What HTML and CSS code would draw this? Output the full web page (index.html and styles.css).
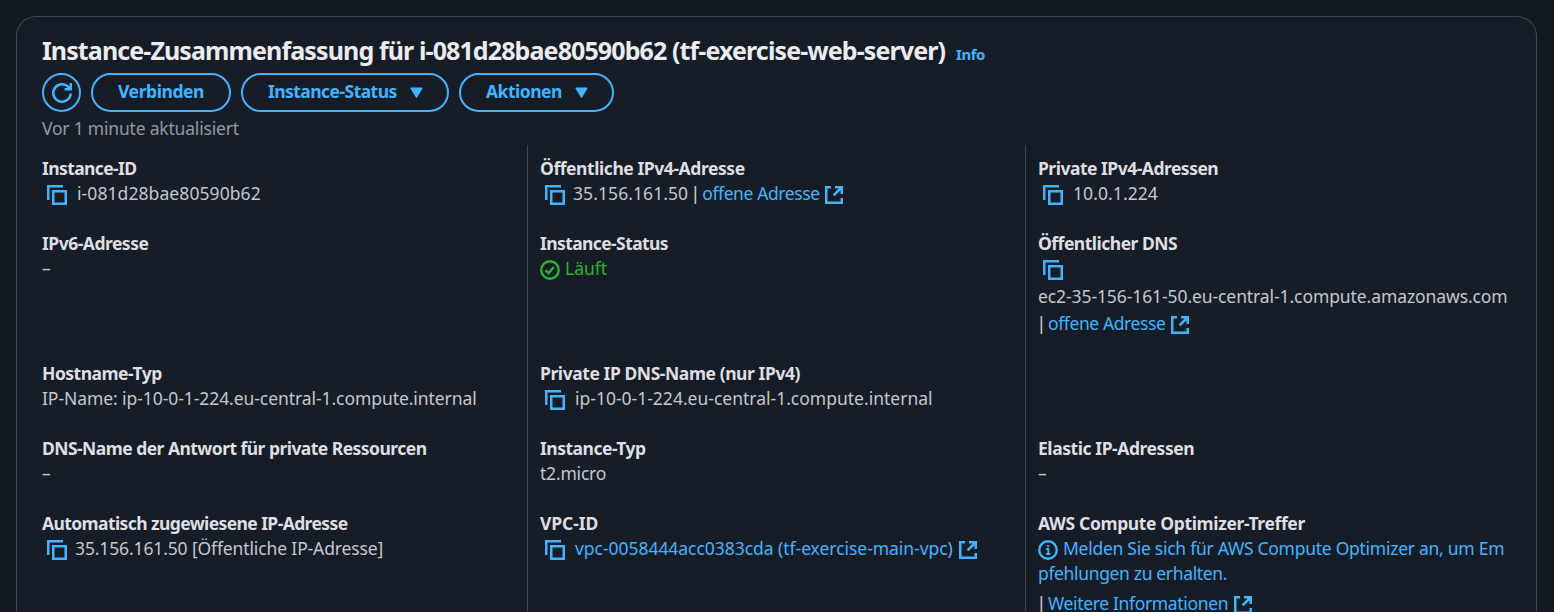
FILE: index.html
```html
<!DOCTYPE html>
<html lang="de">
<head>
<meta charset="utf-8">
<title>Instance-Zusammenfassung</title>
<link rel="stylesheet" href="styles.css">
</head>
<body>
<svg width="0" height="0" class="sprite">
  <symbol id="copy" viewBox="0 0 20 20"><path d="M1.25 15V1.25H16"/><path d="M6.25 6.25h12.5v12.5H6.25z"/></symbol>
  <symbol id="external" viewBox="0 0 18 18"><path d="M6 1.25H1.25v15.5h15.5V12M10 1.25h6.75V8M16.5 1.5L8.6 9.4"/></symbol>
</svg>
<main class="panel">
  <header class="header">
    <div class="heading"><h1 class="title">Instance-Zusammenfassung für i-081d28bae80590b62 (tf-exercise-web-server)</h1><a class="info">Info</a></div>
    <div class="actions">
      <button class="btn btn-round"><svg class="refresh" viewBox="0 0 20 20"><path d="M18.75 10.5A8.75 8.75 0 1 1 15.4 3.1L18 5.6M18.75 0V6.2H12.6"/></svg></button>
      <button class="btn connect"><span>Verbinden</span></button>
      <button class="btn status"><span>Instance-Status</span><svg class="caret" viewBox="0 0 13 11"><path d="M1.2 1.2h10.6L6.5 9.8z"/></svg></button>
      <button class="btn more"><span>Aktionen</span><svg class="caret" viewBox="0 0 13 11"><path d="M1.2 1.2h10.6L6.5 9.8z"/></svg></button>
    </div>
    <div class="updated"><span>Vor 1 minute aktualisiert</span></div>
  </header>
  <dl class="grid">
    <div class="cell"><dt class="dt-tight"><span>Instance-ID</span></dt><dd><svg class="copy wide"><use href="#copy"/></svg><span class="t-id">i-081d28bae80590b62</span></dd></div>
    <div class="cell"><dt class="dt-open"><span>Öffentliche IPv4-Adresse</span></dt><dd><svg class="copy"><use href="#copy"/></svg><span class="t-ip">35.156.161.50</span><span class="bar">|</span><a class="t-open">offene Adresse</a><svg class="external"><use href="#external"/></svg></dd></div>
    <div class="cell"><dt><span>Private IPv4-Adressen</span></dt><dd><svg class="copy wide"><use href="#copy"/></svg><span class="t-ip">10.0.1.224</span></dd></div>

    <div class="cell"><dt><span>IPv6-Adresse</span></dt><dd class="empty">–</dd></div>
    <div class="cell"><dt class="dt-tight"><span>Instance-Status</span></dt><dd class="running"><svg class="mark" viewBox="0 0 20 20"><circle cx="10" cy="10" r="8.75"/><path d="M5.4 10.2l3.2 3.1 5.2-6.4"/></svg><span>Läuft</span></dd></div>
    <div class="cell"><dt><span>Öffentlicher DNS</span></dt><dd><svg class="copy"><use href="#copy"/></svg></dd><dd class="tall host-line"><span class="t-dns">ec2-35-156-161-50.eu-central-1.compute.amazonaws.com</span></dd><dd class="tall"><span class="bar first">|</span><a class="t-open">offene Adresse</a><svg class="external far"><use href="#external"/></svg></dd></div>

    <div class="cell"><dt><span>Hostname-Typ</span></dt><dd><span class="t-host">IP-Name: ip-10-0-1-224.eu-central-1.compute.internal</span></dd></div>
    <div class="cell"><dt class="dt-open"><span>Private IP DNS-Name (nur IPv4)</span></dt><dd><svg class="copy wide"><use href="#copy"/></svg><span class="t-private">ip-10-0-1-224.eu-central-1.compute.internal</span></dd></div>
    <div class="cell"></div>

    <div class="cell"><dt class="dt-long"><span>DNS-Name der Antwort für private Ressourcen</span></dt><dd class="empty">–</dd></div>
    <div class="cell"><dt><span>Instance-Typ</span></dt><dd><span class="t-type">t2.micro</span></dd></div>
    <div class="cell"><dt class="dt-open"><span>Elastic IP-Adressen</span></dt><dd class="empty">–</dd></div>

    <div class="cell"><dt class="dt-tight"><span>Automatisch zugewiesene IP-Adresse</span></dt><dd><svg class="copy"><use href="#copy"/></svg><span class="t-auto">35.156.161.50 [Öffentliche IP-Adresse]</span></dd></div>
    <div class="cell"><dt class="dt-vpc"><span>VPC-ID</span></dt><dd><svg class="copy wide"><use href="#copy"/></svg><a class="t-vpc">vpc-0058444acc0383cda (tf-exercise-main-vpc)</a><svg class="external far"><use href="#external"/></svg></dd></div>
    <div class="cell"><dt class="dt-loose"><span>AWS Compute Optimizer-Treffer</span></dt><dd class="link"><svg class="mark" viewBox="0 0 20 20"><circle cx="10" cy="10" r="8.75"/><path class="glyph" d="M8.2 9h2.1v5M8 14.1h4.4M9 6.1h2.3"/></svg><a class="t-opt">Melden Sie sich für AWS Compute Optimizer an, um Em</a></dd><dd><a class="t-more">pfehlungen zu erhalten.</a></dd><dd class="more-info"><span class="bar first">|</span><a class="t-more">Weitere Informationen</a><svg class="external far"><use href="#external"/></svg></dd></div>
  </dl>
</main>
</body>
</html>
```
FILE: styles.css
```css
* { box-sizing: border-box; }
html, body { height: 100%; margin: 0; overflow: hidden; }
body {
  background: #131920;
  padding: 16px 17px 0 16px;
  font: 17.5px/25px "Noto Sans", "Open Sans", sans-serif;
  color: #c6c6cd;
}
.sprite { display: none; }
svg { fill: none; stroke: #42b4ff; stroke-width: 2.5; flex: none; }
a { color: #42b4ff; }
.panel {
  height: 596px;
  overflow: hidden;
  border: 1px solid #424650;
  border-bottom: 0;
  border-radius: 20px 20px 0 0;
  background: #161d26;
  white-space: nowrap;
}
.header { padding: 17px 25px 0; height: 128px; }
.heading { display: flex; align-items: baseline; height: 39px; line-height: 32px; }
.title { margin: 0; font-size: 25px; line-height: 32px; font-weight: 700; color: #ebebf0; letter-spacing: -0.89px; }
.info { margin-left: 11px; font-size: 15px; font-weight: 700; letter-spacing: -0.5px; }
.actions { display: flex; gap: 10px; height: 39px; }
.btn {
  display: flex; align-items: center; height: 39px; padding: 0 0 2px 25px;
  border: 2px solid #42b4ff; border-radius: 20px; background: none;
  font: 700 17.5px/25px "Noto Sans", sans-serif; letter-spacing: -0.42px; color: #42b4ff;
}
.btn-round { width: 39px; padding: 0; justify-content: center; }
.connect { width: 140px; }
.status { width: 208px; letter-spacing: -0.55px; }
.more { width: 155px; letter-spacing: -0.5px; }
.refresh { width: 20px; height: 20px; }
.caret { width: 13px; height: 11px; margin: 2px 0 0 13.5px; fill: #42b4ff; stroke-width: 1.6; stroke-linejoin: round; }
.updated { height: 25px; margin-top: 4px; color: #9497a0; letter-spacing: -0.2px; }
.grid { display: grid; grid-template-columns: 510px 498px 1fr; margin: 0; }
.cell { padding: 11px 0 14px 12px; border-left: 1px solid #424650; }
.cell:nth-child(3n+1) { padding-left: 25px; border-left: 0; }
dt { height: 25px; font-weight: 700; color: #dedee3; letter-spacing: -0.5px; }
.dt-tight { letter-spacing: -0.6px; }
.dt-open { letter-spacing: -0.43px; }
.dt-long { letter-spacing: -0.54px; }
.dt-loose { letter-spacing: -0.37px; }
.dt-vpc { letter-spacing: -0.1px; }
dd { display: flex; align-items: center; height: 25px; margin: 0; letter-spacing: -0.4px; }
.tall { height: 27px; }
.host-line { height: 28px; padding-top: 3px; }
.tall:last-child { padding-top: 1px; }
.more-info { height: 35px; }
.copy { width: 20px; height: 20px; margin: 3px 8px 0 5px; }
.wide { margin-right: 10px; }
.external { width: 18px; height: 18px; margin: 3px 0 0 5px; }
.far { margin-left: 6px; }
.mark { width: 20px; height: 20px; margin: 3px 5px 0 0; stroke-width: 2.3; }
.glyph { stroke-width: 1.9; }
.running { color: #2bb534; letter-spacing: 0; }
.running .mark { stroke: #2bb534; }
.bar { width: 6px; margin: 0 4px; font-weight: 500; display: flex; justify-content: center; }
.bar.first { margin-left: 0; }
.t-id, .t-ip { letter-spacing: 0.08px; }
.t-host { letter-spacing: -0.07px; }
.t-private { letter-spacing: 0; }
.t-dns { letter-spacing: -0.09px; }
.t-type { letter-spacing: -0.2px; }
.t-auto { letter-spacing: -0.13px; }
.t-vpc { letter-spacing: -0.04px; }
.t-opt { letter-spacing: -0.27px; }
.t-more { letter-spacing: -0.35px; }
```
